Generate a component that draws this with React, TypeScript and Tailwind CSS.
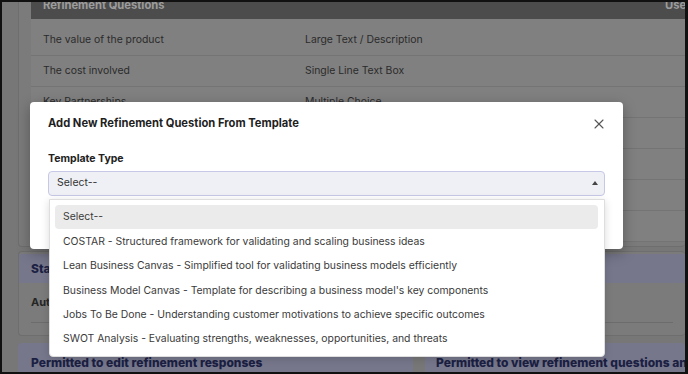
import { X } from 'lucide-react';

const rows = [
  ['The value of the product', 'Large Text / Description'],
  ['The cost involved', 'Single Line Text Box'],
  ['Key Partnerships', 'Multiple Choice'],
  ['Customer Segments', 'Large Text / Description'],
  ['Revenue Streams', 'Single Line Text Box'],
  ['Channels', 'Multiple Choice'],
  ['Key Resources', 'Large Text / Description'],
];

const templates = [
  'Select--',
  'COSTAR - Structured framework for validating and scaling business ideas',
  'Lean Business Canvas - Simplified tool for validating business models efficiently',
  "Business Model Canvas - Template for describing a business model's key components",
  'Jobs To Be Done - Understanding customer motivations to achieve specific outcomes',
  'SWOT Analysis - Evaluating strengths, weaknesses, opportunities, and threats',
];

export default function App() {
  return (
    <div
      className="w-[688px] h-[374px] bg-[#111] pt-[2px] pl-[2px] pr-[3px] pb-[2px] overflow-hidden"
      style={{ fontFamily: 'Inter, "Liberation Sans", sans-serif' }}
    >
      <div className="relative h-full bg-[#777777] overflow-hidden">
        {/* page behind the dialog (already dimmed) */}
        <div className="flex flex-col pl-[16px]">
          {/* questions card */}
          <div className="-mt-[23px] border border-[#6e6e6e] bg-[#7b7b7b] rounded-[4px] p-[12px] pb-[4px] pr-0 border-r-0">
            <div className="bg-[#808080]">
              <div className="h-[27px] bg-[#4c4c4c] flex items-center text-[11.2px] font-bold text-[#9c9c9c] whitespace-nowrap">
                <div className="w-[274px] shrink-0 pl-[12px]">Refinement Questions</div>
                <div className="w-[360px] shrink-0"></div>
                <div className="shrink-0">Used In</div>
              </div>
              {rows.map((r, i) => (
                <div
                  key={i}
                  className={`flex items-center text-[10.4px] text-[#2b2b2b] border-b border-[#747474] ${
                    i === 0 ? 'h-[37px] pt-[6px]' : 'h-[31px]'
                  }`}
                >
                  <div className="w-[274px] pl-[12px]">{r[0]}</div>
                  <div>{r[1]}</div>
                </div>
              ))}
            </div>
          </div>

          {/* status card */}
          <div className="mt-[4px] border border-[#6e6e6e] bg-[#7b7b7b] rounded-[4px] border-r-0 h-[85px] flex flex-col">
            <div className="h-[29px] mt-[2px] bg-[#76778b] flex items-center pl-[12px] text-[12px] font-extrabold text-[#1d2244]">
              Status Settings
            </div>
            <div className="mx-[12px] h-[40px] border-b border-[#6c6c6c] flex items-center text-[11px] font-bold text-[#252525]">
              Auto-generate refinement responses
            </div>
          </div>

          {/* permissions */}
          <div className="mt-[7px] flex gap-[12px]">
            <div className="w-[395px] h-[40px] rounded-t-[4px] bg-[#76778b] flex items-center pl-[13px] text-[12px] font-extrabold text-[#1b2043] whitespace-nowrap">
              Permitted to edit refinement responses
            </div>
            <div className="flex-1 h-[40px] rounded-t-[4px] bg-[#76778b] flex items-center pl-[11px] text-[12px] font-extrabold text-[#1b2043] whitespace-nowrap overflow-hidden">
              Permitted to view refinement questions and responses
            </div>
          </div>
        </div>

        {/* dialog */}
        <div className="absolute left-[28px] top-[100px] w-[593px] h-[147px] bg-white rounded-[4px] shadow-[0_4px_14px_rgba(0,0,0,0.3)] px-[18px]">
          <div className="flex items-center justify-between h-[42px] pt-[1px]">
            <h2 className="text-[11.2px] font-bold text-[#1f1f1f]">
              Add New Refinement Question From Template
            </h2>
            <X size={16} strokeWidth={1.6} className="text-[#555] mr-[-2px]" />
          </div>
          <div className="mt-[7px] text-[10.5px] font-bold text-[#222]">Template Type</div>
          <div className="mt-[4px] h-[25px] rounded-[4px] border-[1.5px] border-[#c6c8e6] bg-[#eff0f6] flex items-center justify-between pl-[8px] pr-[6px] text-[10.5px] text-[#333]">
            <span>Select--</span>
            <span className="w-0 h-0 border-l-[3px] border-r-[3px] border-b-[4px] border-l-transparent border-r-transparent border-b-[#444]"></span>
          </div>
        </div>

        {/* open select menu */}
        <div className="absolute left-[47px] top-[197px] w-[556px] bg-white border border-[#dedede] rounded-b-[4px] shadow-[0_2px_8px_rgba(0,0,0,0.15)] p-[5px] pr-[6px] flex flex-col">
          {templates.map((t, i) => (
            <div
              key={i}
              className={`h-[24.4px] flex items-center pl-[8px] text-[10.4px] text-[#3a3a3a] rounded-[4px] ${
                i === 0 ? 'bg-[#ebebeb]' : ''
              }`}
            >
              {t}
            </div>
          ))}
        </div>
      </div>
    </div>
  );
}
